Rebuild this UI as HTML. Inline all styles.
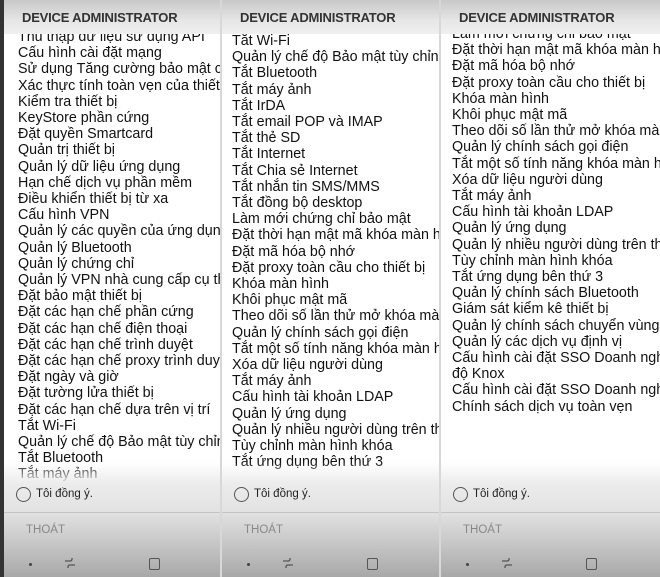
<!DOCTYPE html><html><head><meta charset="utf-8"><style>
body{margin:0;width:660px;height:577px;background:#d8d8d8;overflow:hidden;font-family:"Liberation Sans","DejaVu Sans",sans-serif}
.p{position:absolute;top:0;height:577px;background:#fff;overflow:hidden}
.h{position:absolute;top:0;left:0;right:0;height:34px;background:linear-gradient(#c8c8c8,#e6e6e6 60%,#efefef);z-index:2}
.h span{position:absolute;left:18px;top:10px;font-weight:bold;font-size:13px;color:#333;letter-spacing:-0.2px}
.l{position:absolute;top:29px;left:14px;font-size:14.3px;line-height:16.2px;color:#111;white-space:nowrap}
.b{position:absolute;left:0;right:0;top:462px;bottom:0;z-index:3;background:linear-gradient(rgba(255,255,255,0),#ececec 22px,#e2e2e2 50px,#c8c8c8 80px,#a8a8a8 115px)}
.r{position:absolute;left:12px;top:25px;width:13px;height:13px;border:1.5px solid #555;border-radius:50%}
.rt{position:absolute;left:32px;top:26px;font-size:11.5px;color:#222}
.d{position:absolute;left:0;right:0;top:50px;border-top:1px solid #c4c4c4}
.t{position:absolute;left:22px;top:62px;font-size:11.5px;color:#888}
.n1{position:absolute;left:25px;top:101px;width:3px;height:3px;background:#444;border-radius:50%}
.n2{position:absolute;left:60px;top:95px}
.n3{position:absolute;left:145px;top:96px;width:9px;height:10px;border:1.5px solid #555;border-radius:2px}
</style></head><body>
<div style="position:absolute;left:0;top:0;width:4px;height:577px;background:#333"></div>
<div class="p" style="left:4px;width:216px">
<div class="h"><span>DEVICE ADMINISTRATOR</span></div>
<div class="l" style="left:14px">Thu thập dữ liệu sử dụng API<br>Cấu hình cài đặt mạng<br>Sử dụng Tăng cường bảo mật ch<br>Xác thực tính toàn vẹn của thiết<br>Kiểm tra thiết bị<br>KeyStore phần cứng<br>Đặt quyền Smartcard<br>Quản trị thiết bị<br>Quản lý dữ liệu ứng dụng<br>Hạn chế dịch vụ phần mềm<br>Điều khiển thiết bị từ xa<br>Cấu hình VPN<br>Quản lý các quyền của ứng dụng<br>Quản lý Bluetooth<br>Quản lý chứng chỉ<br>Quản lý VPN nhà cung cấp cụ thể<br>Đặt bảo mật thiết bị<br>Đặt các hạn chế phần cứng<br>Đặt các hạn chế điện thoại<br>Đặt các hạn chế trình duyệt<br>Đặt các hạn chế proxy trình duyệt<br>Đặt ngày và giờ<br>Đặt tường lửa thiết bị<br>Đặt các hạn chế dựa trên vị trí<br>Tắt Wi-Fi<br>Quản lý chế độ Bảo mật tùy chỉnh<br>Tắt Bluetooth<br>Tắt máy ảnh</div>
<div class="b"><div class="r"></div><div class="rt">Tôi đồng ý.</div><div class="d"></div><div class="t">THOÁT</div><div class="n1"></div><svg class="n2" width="12" height="12"><path d="M1 4H6Q8 4 8 2V1M11 8H6Q4 8 4 10V11" fill="none" stroke="#555" stroke-width="1.3"/></svg><div class="n3"></div></div>
</div>
<div class="p" style="left:222px;width:217px">
<div class="h"><span>DEVICE ADMINISTRATOR</span></div>
<div class="l" style="left:10px;top:33px">Tắt Wi-Fi<br>Quản lý chế độ Bảo mật tùy chỉnh<br>Tắt Bluetooth<br>Tắt máy ảnh<br>Tắt IrDA<br>Tắt email POP và IMAP<br>Tắt thẻ SD<br>Tắt Internet<br>Tắt Chia sẻ Internet<br>Tắt nhắn tin SMS/MMS<br>Tắt đồng bộ desktop<br>Làm mới chứng chỉ bảo mật<br>Đặt thời hạn mật mã khóa màn hình<br>Đặt mã hóa bộ nhớ<br>Đặt proxy toàn cầu cho thiết bị<br>Khóa màn hình<br>Khôi phục mật mã<br>Theo dõi số lần thử mở khóa màn<br>Quản lý chính sách gọi điện<br>Tắt một số tính năng khóa màn hình<br>Xóa dữ liệu người dùng<br>Tắt máy ảnh<br>Cấu hình tài khoản LDAP<br>Quản lý ứng dụng<br>Quản lý nhiều người dùng trên thiết<br>Tùy chỉnh màn hình khóa<br>Tắt ứng dụng bên thứ 3</div>
<div class="b"><div class="r"></div><div class="rt">Tôi đồng ý.</div><div class="d"></div><div class="t">THOÁT</div><div class="n1"></div><svg class="n2" width="12" height="12"><path d="M1 4H6Q8 4 8 2V1M11 8H6Q4 8 4 10V11" fill="none" stroke="#555" stroke-width="1.3"/></svg><div class="n3"></div></div>
</div>
<div class="p" style="left:441px;width:219px">
<div class="h"><span>DEVICE ADMINISTRATOR</span></div>
<div class="l" style="left:11px;top:26px">Làm mới chứng chỉ bảo mật<br>Đặt thời hạn mật mã khóa màn hình<br>Đặt mã hóa bộ nhớ<br>Đặt proxy toàn cầu cho thiết bị<br>Khóa màn hình<br>Khôi phục mật mã<br>Theo dõi số lần thử mở khóa màn<br>Quản lý chính sách gọi điện<br>Tắt một số tính năng khóa màn hình<br>Xóa dữ liệu người dùng<br>Tắt máy ảnh<br>Cấu hình tài khoản LDAP<br>Quản lý ứng dụng<br>Quản lý nhiều người dùng trên thiết<br>Tùy chỉnh màn hình khóa<br>Tắt ứng dụng bên thứ 3<br>Quản lý chính sách Bluetooth<br>Giám sát kiểm kê thiết bị<br>Quản lý chính sách chuyển vùng<br>Quản lý các dịch vụ định vị<br>Cấu hình cài đặt SSO Doanh nghiệp<br>độ Knox<br>Cấu hình cài đặt SSO Doanh nghiệp<br>Chính sách dịch vụ toàn vẹn</div>
<div class="b"><div class="r"></div><div class="rt">Tôi đồng ý.</div><div class="d"></div><div class="t">THOÁT</div><div class="n1"></div><svg class="n2" width="12" height="12"><path d="M1 4H6Q8 4 8 2V1M11 8H6Q4 8 4 10V11" fill="none" stroke="#555" stroke-width="1.3"/></svg><div class="n3"></div></div>
</div>
</body></html>
